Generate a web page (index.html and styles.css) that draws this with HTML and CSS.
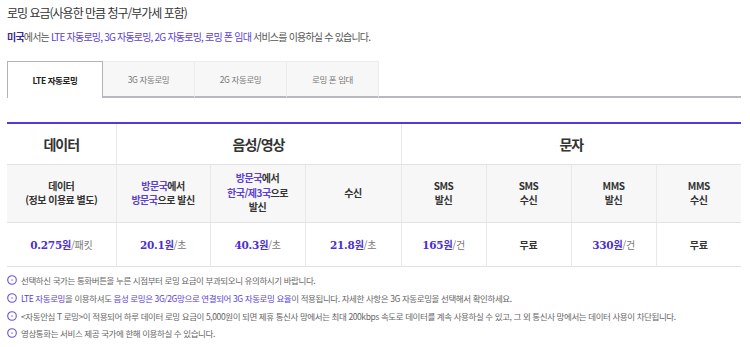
FILE: index.html
```html
<!DOCTYPE html>
<html lang="ko">
<head>
<meta charset="utf-8">
<title>로밍 요금</title>
<link rel="stylesheet" href="styles.css">
</head>
<body>
<div class="page">
  <h2 class="title">로밍 요금(사용한 만큼 청구/부가세 포함)</h2>
  <p class="intro"><b class="country">미국</b>에서는 <span class="hl">LTE 자동로밍, 3G 자동로밍, 2G 자동로밍, 로밍 폰 임대</span> 서비스를 이용하실 수 있습니다.</p>

  <div class="tabs">
    <div class="tab active">LTE 자동로밍</div>
    <div class="tab">3G 자동로밍</div>
    <div class="tab">2G 자동로밍</div>
    <div class="tab">로밍 폰 임대</div>
    <div class="tab-rest"></div>
  </div>

  <table class="rates">
    <colgroup>
      <col class="c1"><col class="c2"><col class="c3"><col class="c4">
      <col class="c5"><col class="c5"><col class="c5"><col class="c5">
    </colgroup>
    <thead>
      <tr class="head1">
        <th>데이터</th>
        <th colspan="3">음성/영상</th>
        <th colspan="4">문자</th>
      </tr>
      <tr class="head2">
        <th>데이터<br>(정보 이용료 별도)</th>
        <th><span class="hl">방문국</span>에서<br><span class="hl">방문국</span>으로 발신</th>
        <th><span class="hl">방문국</span>에서<br><span class="hl">한국/제3국</span>으로<br>발신</th>
        <th>수신</th>
        <th>SMS<br>발신</th>
        <th>SMS<br>수신</th>
        <th>MMS<br>발신</th>
        <th>MMS<br>수신</th>
      </tr>
    </thead>
    <tbody>
      <tr class="vals">
        <td><span class="num">0.275</span><span class="won">원</span>/패킷</td>
        <td><span class="num">20.1</span><span class="won">원</span>/초</td>
        <td><span class="num">40.3</span><span class="won">원</span>/초</td>
        <td><span class="num">21.8</span><span class="won">원</span>/초</td>
        <td><span class="num">165</span><span class="won">원</span>/건</td>
        <td class="free">무료</td>
        <td><span class="num">330</span><span class="won">원</span>/건</td>
        <td class="free">무료</td>
      </tr>
    </tbody>
  </table>

  <ul class="notes">
    <li><svg class="ico" viewBox="0 0 10 10" width="10" height="10"><circle cx="5" cy="5" r="4.3" fill="none" stroke="#6a4fd8" stroke-width="1.1"/><rect x="4.2" y="4.6" width="1.6" height="0.9" fill="#6a4fd8"/></svg><span>선택하신 국가는 통화버튼을 누른 시점부터 로밍 요금이 부과되오니 유의하시기 바랍니다.</span></li>
    <li><svg class="ico" viewBox="0 0 10 10" width="10" height="10"><circle cx="5" cy="5" r="4.3" fill="none" stroke="#6a4fd8" stroke-width="1.1"/><rect x="4.2" y="4.6" width="1.6" height="0.9" fill="#6a4fd8"/></svg><span><span class="hl">LTE 자동로밍</span>을 이용하셔도 <span class="hl">음성 로밍은 3G/2G망으로 연결되어 3G 자동로밍 요율</span>이 적용됩니다. 자세한 사항은 3G 자동로밍을 선택해서 확인하세요.</span></li>
    <li><svg class="ico" viewBox="0 0 10 10" width="10" height="10"><circle cx="5" cy="5" r="4.3" fill="none" stroke="#6a4fd8" stroke-width="1.1"/><rect x="4.2" y="4.6" width="1.6" height="0.9" fill="#6a4fd8"/></svg><span>&lt;자동안심 T 로밍&gt;이 적용되어 하루 데이터 로밍 요금이 5,000원이 되면 제휴 통신사 망에서는 최대 200kbps 속도로 데이터를 계속 사용하실 수 있고, 그 외 통신사 망에서는 데이터 사용이 차단됩니다.</span></li>
    <li><svg class="ico" viewBox="0 0 10 10" width="10" height="10"><circle cx="5" cy="5" r="4.3" fill="none" stroke="#6a4fd8" stroke-width="1.1"/><rect x="4.2" y="4.6" width="1.6" height="0.9" fill="#6a4fd8"/></svg><span>영상통화는 서비스 제공 국가에 한해 이용하실 수 있습니다.</span></li>
  </ul>
</div>
</body>
</html>
```
FILE: styles.css
```css
* { box-sizing: border-box; }
html, body { margin: 0; padding: 0; background: #fff; }
body {
  font-family: "Noto Sans CJK KR", "Noto Sans", sans-serif;
  color: #333;
}
.page {
  width: 750px;
  padding: 0 9px 0 7px;
}
.title {
  margin: 0;
  padding-top: 4px;
  height: 26px;
  font-size: 12px;
  line-height: 18px;
  font-weight: 400;
  letter-spacing: -1px;
  color: #333;
}
.intro {
  margin: 0;
  height: 35px;
  padding-top: 3px;
  font-size: 10px;
  line-height: 16px;
  letter-spacing: -0.8px;
  color: #555;
}
.intro .country { color: #3b2a9e; font-weight: 700; }
.hl { color: #5b3fd8; }

.tabs {
  display: flex;
  height: 37px;
}
.tab {
  width: 92px;
  height: 37px;
  background: #f7f7f7;
  border-top: 1px solid #ececec;
  border-right: 1px solid #ececec;
  border-bottom: 2px solid #b8b8c0;
  display: flex;
  align-items: center;
  justify-content: center;
  font-size: 8.5px;
  letter-spacing: -0.4px;
  color: #777;
}
.tab.active {
  width: 96px;
  background: #fff;
  border: 1px solid #b4b4b4;
  border-bottom: none;
  color: #222;
  font-weight: 700;
}
.tab-rest {
  flex: 1;
  border-bottom: 2px solid #b8b8c0;
}

.rates {
  margin-top: 24px;
  width: 734px;
  table-layout: fixed;
  border-collapse: collapse;
  border-top: 2px solid #4f3bd6;
  border-bottom: 1px solid #e2e2e2;
}
.c1 { width: 109px; }
.c2 { width: 94px; }
.c3 { width: 95px; }
.c4 { width: 96px; }
.c5 { width: 85px; }
.rates th, .rates td {
  padding: 0;
  text-align: center;
  border-left: 1px solid #e9e9e9;
}
.rates tr > :first-child { border-left: none; }
.head1 th {
  height: 41px;
  font-size: 14px;
  font-weight: 700;
  letter-spacing: -1px;
  color: #333;
  border-bottom: 1px solid #e2e2e2;
}
.head2 th {
  height: 58px;
  background: #f7f7f7;
  font-size: 10px;
  line-height: 14.5px;
  font-weight: 700;
  letter-spacing: -0.5px;
  color: #333;
  border-bottom: 1px solid #e2e2e2;
}
.vals td {
  height: 44px;
  font-size: 10px;
  color: #777;
  letter-spacing: -0.3px;
}
.num {
  font-family: "DejaVu Serif", serif;
  font-weight: 700;
  font-size: 10.5px;
  color: #4b2fd0;
  letter-spacing: -0.2px;
}
.won { color: #4b2fd0; font-weight: 700; }
.vals td.free { color: #333; font-weight: 700; }

.notes {
  list-style: none;
  margin: 5px 0 0;
  padding: 0;
}
.notes li {
  display: flex;
  align-items: center;
  height: 17.7px;
  font-size: 8.5px;
  letter-spacing: -0.4px;
  color: #666;
  white-space: nowrap;
}
.notes .ico {
  flex: none;
  margin-right: 4px;
}
```
